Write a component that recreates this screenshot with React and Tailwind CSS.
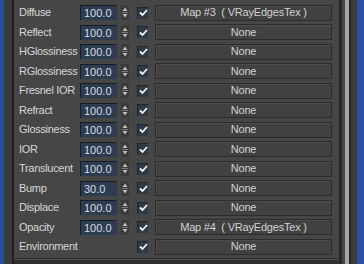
import React from "react";

const rows = [
  { label: "Diffuse", value: "100.0", map: "Map #3  ( VRayEdgesTex )" },
  { label: "Reflect", value: "100.0", map: "None" },
  { label: "HGlossiness", value: "100.0", map: "None" },
  { label: "RGlossiness", value: "100.0", map: "None" },
  { label: "Fresnel IOR", value: "100.0", map: "None" },
  { label: "Refract", value: "100.0", map: "None" },
  { label: "Glossiness", value: "100.0", map: "None" },
  { label: "IOR", value: "100.0", map: "None" },
  { label: "Translucent", value: "100.0", map: "None" },
  { label: "Bump", value: "30.0", map: "None" },
  { label: "Displace", value: "100.0", map: "None" },
  { label: "Opacity", value: "100.0", map: "Map #4  ( VRayEdgesTex )" },
  { label: "Environment", value: null, map: "None" },
];

const Spinner = () => (
  <div className="w-[8px] h-[15px] bg-[#3a3a3a] flex items-center justify-center">
    <svg width="8" height="13" viewBox="0 0 8 13">
      <path d="M4 1.5 L6.5 5 L1.5 5 Z" fill="#bdbdbd" />
      <rect x="1" y="6" width="6" height="1" fill="#7a7a7a" />
      <path d="M1.5 8 L6.5 8 L4 11.5 Z" fill="#bdbdbd" />
    </svg>
  </div>
);

const Check = () => (
  <div className="w-[11px] h-[12px] bg-[#2d3a47] border-t border-l border-[#1f252c] flex items-center justify-center">
    <svg width="9" height="8" viewBox="0 0 9 8">
      <path d="M1 3.5 L3.5 6 L8 1" stroke="#f2f4f6" strokeWidth="1.8" fill="none" />
    </svg>
  </div>
);

const App = () => {
  return (
    <div
      className="w-[364px] h-[264px] flex bg-[#2a2a2a] overflow-hidden"
      style={{ fontFamily: '"Liberation Sans", Arial, sans-serif' }}
    >
      <div className="w-[4px] h-full bg-[#2a4f9c]" />
      <div className="w-[8px] h-full bg-[#3b3b3b]" />
      <div className="w-[2px] h-full bg-[#1f1f1f]" />
      <div className="w-[325px] h-full flex flex-col bg-[#464646]">
        <div className="flex flex-col pt-[3px] pl-[5px]">
          {rows.map((r) => (
            <div key={r.label} className="flex items-center h-[19.5px]">
              <div className="w-[61px] text-[11px] tracking-[-0.3px] text-[#d6d6d6] leading-none whitespace-nowrap">
                {r.label}
              </div>
              {r.value ? (
                <>
                  <div className="w-[37px] h-[15px] bg-[#2d3c4e] border-t border-l border-[#161c22] text-[11px] leading-[14px] text-[#d4dde8] pl-[3px]">
                    {r.value}
                  </div>
                  <div className="w-[4px]" />
                  <Spinner />
                  <div className="w-[8px]" />
                </>
              ) : (
                <div className="w-[57px]" />
              )}
              <Check />
              <div className="w-[7px]" />
              <div className="w-[177px] h-[16px] bg-[#414141] border border-[#2b2b2b] shadow-[inset_1px_1px_0_#4d4d4d] flex items-center justify-center text-[11px] tracking-[-0.2px] text-[#d2d2d2] leading-none whitespace-pre">
                {r.map}
              </div>
            </div>
          ))}
        </div>
        <div className="mt-[1px] h-[1px] w-full bg-[#2f2f2f]" />
        <div className="h-[1px] w-full bg-[#505050]" />
        <div className="flex-1 bg-[#2e2e2e]" />
      </div>
      <div className="w-[3px] h-full bg-[#262626]" />
      <div className="w-[3px] h-full bg-[#444444]" />
      <div className="w-[4px] h-full bg-[#a4a4a4]" />
      <div className="w-[2px] h-full bg-[#262626]" />
      <div className="w-[6px] h-full bg-[#3c3c3c]" />
      <div className="flex-1 h-full bg-[#2a50a0]" />
    </div>
  );
};

export default App;
